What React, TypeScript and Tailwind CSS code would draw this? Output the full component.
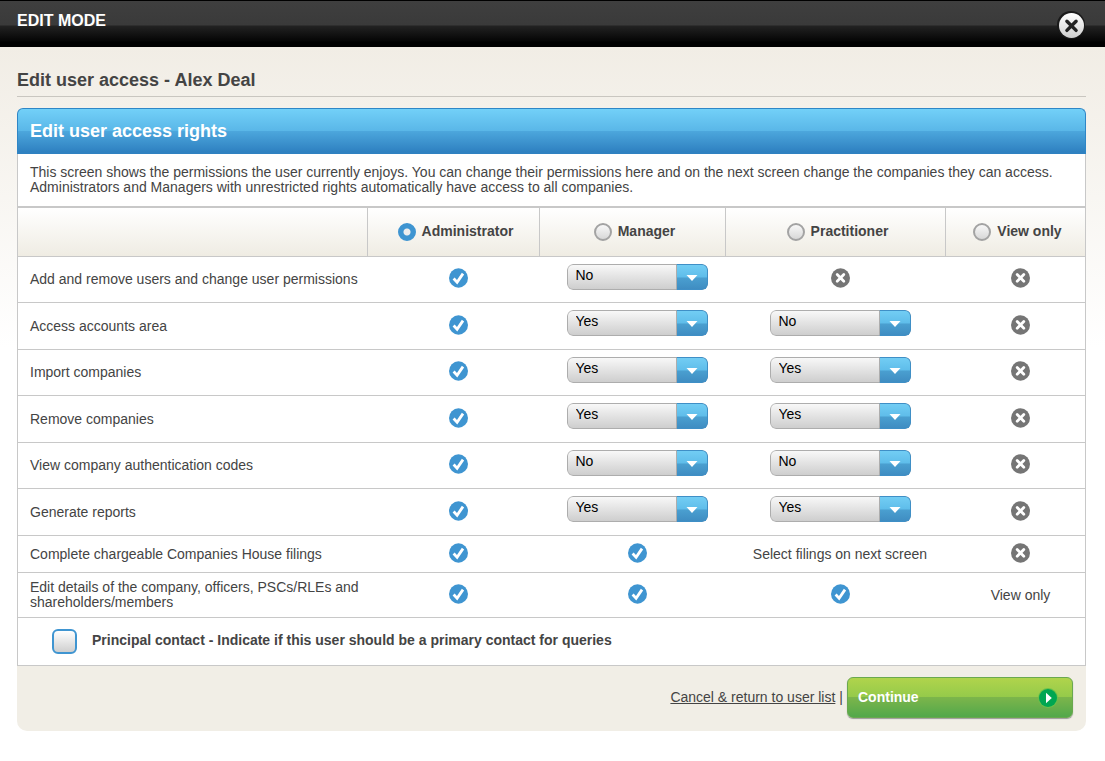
import { useState } from "react";

type Access = "yes" | "no" | "tick" | "cross" | string;

interface Permission {
  label: string;
  cells: Access[];
}

const roles = ["Administrator", "Manager", "Practitioner", "View only"];

const permissions: Permission[] = [
  {
    label: "Add and remove users and change user permissions",
    cells: ["tick", "no", "cross", "cross"],
  },
  { label: "Access accounts area", cells: ["tick", "yes", "no", "cross"] },
  { label: "Import companies", cells: ["tick", "yes", "yes", "cross"] },
  { label: "Remove companies", cells: ["tick", "yes", "yes", "cross"] },
  {
    label: "View company authentication codes",
    cells: ["tick", "no", "no", "cross"],
  },
  { label: "Generate reports", cells: ["tick", "yes", "yes", "cross"] },
];

const fixedPermissions: Permission[] = [
  {
    label: "Complete chargeable Companies House filings",
    cells: ["tick", "tick", "Select filings on next screen", "cross"],
  },
  {
    label: "Edit details of the company, officers, PSCs/RLEs and shareholders/members",
    cells: ["tick", "tick", "tick", "View only"],
  },
];

function TickIcon() {
  return (
    <svg width="19" height="20" viewBox="0 0 19 20" role="img" aria-label="Allowed">
      <ellipse cx="9.5" cy="10" rx="9.5" ry="9.7" fill="#3f95d1" />
      <path
        d="M4.6 10.6l3.5 3.6 5.9-8.6"
        fill="none"
        stroke="#fff"
        strokeWidth="2.8"
      />
    </svg>
  );
}

function CrossIcon() {
  return (
    <svg width="19" height="20" viewBox="0 0 19 20" role="img" aria-label="Not allowed">
      <ellipse cx="9.5" cy="10" rx="9.5" ry="9.7" fill="#757575" />
      <path
        d="M6.2 6.6l6.6 6.6M12.8 6.6l-6.6 6.6"
        fill="none"
        stroke="#fff"
        strokeWidth="2.8"
        strokeLinecap="round"
      />
    </svg>
  );
}

function YesNoSelect({ initial, label }: { initial: string; label: string }) {
  const [value, setValue] = useState(initial);

  return (
    <div className="relative w-[141px] h-[26px] rounded-md overflow-hidden">
      <select
        aria-label={label}
        value={value}
        onChange={(e) => setValue(e.target.value)}
        className="block appearance-none w-full h-full pl-2 pr-9 pb-1 text-sm leading-5 text-black rounded-md border border-[#adadad] bg-linear-to-b from-[#f8f8f8] to-[#cecece]"
      >
        <option value="yes">Yes</option>
        <option value="no">No</option>
      </select>
      <span className="absolute right-0 inset-y-0 w-8 flex items-center justify-center pointer-events-none rounded-r-md border border-[#3f8fc6] border-l-[#adadad] bg-[linear-gradient(#72cdf4,#5fbdea_50%,#4a9fd0_54%,#3f8dc2)]">
        <svg width="12" height="6" viewBox="0 0 12 6" className="mt-0.5">
          <path d="M0.5 0h11L6 6z" fill="#fff" />
        </svg>
      </span>
    </div>
  );
}

function PermissionCell({ access, label }: { access: Access; label: string }) {
  if (access === "yes" || access === "no") {
    return (
      <div className="flex justify-center pb-1.5">
        <YesNoSelect initial={access} label={label} />
      </div>
    );
  }
  if (access === "tick" || access === "cross") {
    return (
      <div className="flex justify-center pb-[3px]">
        {access === "tick" ? <TickIcon /> : <CrossIcon />}
      </div>
    );
  }
  return <>{access}</>;
}

function PermissionRow({ permission, className }: { permission: Permission; className: string }) {
  return (
    <tr className={className}>
      <th
        scope="row"
        className="border-b border-[#c8c8c8] pl-3 pr-2 text-left font-normal"
      >
        {permission.label}
      </th>
      {permission.cells.map((access, i) => (
        <td key={roles[i]} className="border-b border-[#c8c8c8] pl-2 text-center last:pl-2.5">
          <PermissionCell access={access} label={`${permission.label} - ${roles[i]}`} />
        </td>
      ))}
    </tr>
  );
}

export default function App() {
  const [role, setRole] = useState("Administrator");
  const [principal, setPrincipal] = useState(false);

  return (
    <div className="min-h-screen bg-white font-['Liberation_Sans',Arial,sans-serif] text-sm leading-[15px] text-[#444]">
      <header className="flex h-[47px] items-start justify-between border-t border-black bg-[linear-gradient(#3f3f3f,#3a3a3a_24px,#222_25px,#050505_40px,#000_41px)] pl-[17px] pr-5">
        <h2 className="pt-2.5 text-base leading-5 font-bold text-white">EDIT MODE</h2>
        <button type="button" aria-label="Close" className="mt-2.5">
          <svg width="28" height="28" viewBox="0 0 28 28">
            <defs>
              <linearGradient id="close" x1="0" y1="0" x2="0" y2="1">
                <stop offset="0" stopColor="#fff" />
                <stop offset="1" stopColor="#cfcfcf" />
              </linearGradient>
            </defs>
            <circle cx="14" cy="14" r="14" fill="#1a1a1a" />
            <circle cx="14.5" cy="14.5" r="12.5" fill="url(#close)" />
            <path
              d="M9.9 10.2l9.2 9.2M19.1 10.2l-9.2 9.2"
              stroke="#222"
              strokeWidth="3.4"
              strokeLinecap="round"
            />
          </svg>
        </button>
      </header>

      <main className="bg-[linear-gradient(#f1ede5,#fff_300px)] pt-[23px] pl-[17px] pr-[19px]">
        <h1 className="mb-[11px] border-b border-[#c9c6c0] pb-1.5 text-lg leading-5 font-bold">
          Edit user access - Alex Deal
        </h1>

        <form onSubmit={(e) => e.preventDefault()}>
          <div className="flex h-[46px] items-center rounded-t-md border border-b-0 border-[#2f86c6] bg-[linear-gradient(#72d0f8,#5ab7e8_48%,#4ca6dc_50%,#2f81c1_95%)] px-3 pb-0.5">
            <h2 className="text-lg leading-5 font-bold text-white">Edit user access rights</h2>
          </div>

          <div className="border-x border-b border-[#c8c8c8] bg-white">
            <p className="border-b-2 border-[#c8c8c8] px-3 py-[11px]">
              This screen shows the permissions the user currently enjoys. You can change their
              permissions here and on the next screen change the companies they can access.
              Administrators and Managers with unrestricted rights automatically have access to all
              companies.
            </p>

            <table className="w-full table-fixed border-separate border-spacing-0">
              <colgroup>
                <col />
                <col className="w-[172px]" />
                <col className="w-[186px]" />
                <col className="w-[220px]" />
                <col className="w-[139px]" />
              </colgroup>
              <thead>
                <tr className="h-[49px]">
                  <td className="border-r border-b border-[#c8c8c8] bg-linear-to-b from-white to-[#efece3]" />
                  {roles.map((name) => (
                    <th
                      key={name}
                      scope="col"
                      className="border-r border-b border-[#c8c8c8] bg-linear-to-b from-white to-[#efece3] pl-1 last:border-r-0"
                    >
                      <label className="flex items-center justify-center gap-1.5">
                        <input
                          type="radio"
                          name="role"
                          value={name}
                          checked={role === name}
                          onChange={() => setRole(name)}
                          className="size-[18px] appearance-none rounded-full border-2 border-[#a3a3a3] bg-linear-to-b from-[#f8f8f8] to-[#d8d8d8] checked:border-[#3f95d1] checked:bg-[radial-gradient(circle,#eee_3px,#3f95d1_4px)]"
                        />
                        <span className="pb-0.5">{name}</span>
                      </label>
                    </th>
                  ))}
                </tr>
              </thead>
              <tbody>
                {permissions.map((p) => (
                  <PermissionRow
                    key={p.label}
                    permission={p}
                    className="odd:h-[46px] even:h-[47px]"
                  />
                ))}
              </tbody>
              <tbody>
                {fixedPermissions.map((p) => (
                  <PermissionRow
                    key={p.label}
                    permission={p}
                    className="odd:h-[37px] even:h-[45px]"
                  />
                ))}
              </tbody>
            </table>

            <label className="flex h-[47px] items-center gap-[15px] pl-[34px] font-bold">
              <input
                type="checkbox"
                checked={principal}
                onChange={(e) => setPrincipal(e.target.checked)}
                className="size-[25px] appearance-none rounded-md border-2 border-[#3f95d1] bg-linear-to-b from-white to-[#cfcfcf] checked:bg-[#3f95d1] checked:bg-none"
              />
              <span className="pb-0.5">
                Principal contact - Indicate if this user should be a primary contact for queries
              </span>
            </label>
          </div>

          <div className="flex h-[65px] items-start justify-end gap-1 rounded-b-[10px] bg-[#f1eee6] pt-[11px] pr-[13px]">
            <div className="flex h-[41px] items-center gap-1">
              <a href="#" className="underline">
                Cancel &amp; return to user list
              </a>
              <span>|</span>
            </div>
            <button
              type="submit"
              className="flex h-[41px] w-[226px] items-center justify-between rounded-md border border-[#6aa84f] bg-[linear-gradient(#b0d44c,#95ca4a_48%,#7cb54b_50%,#52a84b)] pl-2.5 pr-3.5 font-bold text-white shadow-[0_1px_1px_#999]"
            >
              Continue
              <svg width="20" height="20" viewBox="0 0 20 20">
                <circle cx="10" cy="10" r="10" fill="#6cc04a" />
                <circle cx="10" cy="10" r="9" fill="#00a651" />
                <path d="M8 4.8v10.4l5.8-5.2z" fill="#fff" />
              </svg>
            </button>
          </div>
        </form>
      </main>
    </div>
  );
}
